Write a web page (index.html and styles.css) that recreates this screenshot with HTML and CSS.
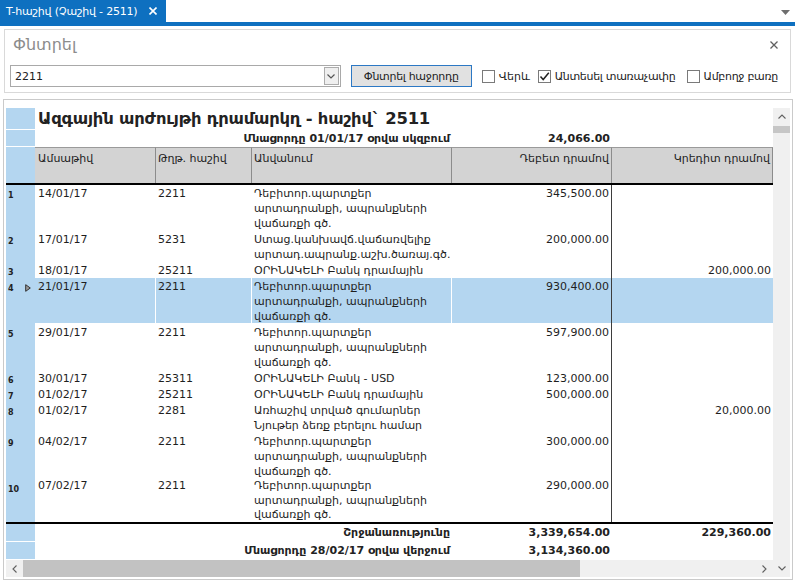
FILE: index.html
```html
<!DOCTYPE html>
<html lang="hy">
<head>
<meta charset="utf-8">
<title>T-հաշիվ</title>
<link rel="stylesheet" href="styles.css">
</head>
<body>
<div class="tabbar">
  <div class="tab">
    <span class="tab-title">T-հաշիվ (Չաշիվ - 2511)</span>
    <svg class="tab-close" width="8" height="8" viewBox="0 0 8 8"><path d="M0.5 0.5L7.5 7.5M7.5 0.5L0.5 7.5" stroke="#fff" stroke-width="1.6"/></svg>
  </div>
  <div class="tab-menu"><svg width="9" height="5" viewBox="0 0 9 5"><path d="M0 0H9L4.5 5Z" fill="#6e6e6e"/></svg></div>
</div>
<div class="tabline"></div>

<div class="search">
  <div class="search-head">
    <span class="search-title">Փնտրել</span>
    <svg class="search-close" width="8" height="8" viewBox="0 0 8 8"><path d="M0.5 0.5L7.5 7.5M7.5 0.5L0.5 7.5" stroke="#606060" stroke-width="1.3"/></svg>
  </div>
  <div class="search-row">
    <div class="combo">
      <span class="combo-text">2211</span>
      <span class="combo-btn"><svg width="8" height="5" viewBox="0 0 8 5"><path d="M0.5 0.5L4 4L7.5 0.5" fill="none" stroke="#555" stroke-width="1.2"/></svg></span>
    </div>
    <div class="btn">Փնտրել հաջորդը</div>
    <div class="chk chk1"><span class="box"></span><span>Վերև</span></div>
    <div class="chk chk2"><span class="box"><svg width="11" height="11" viewBox="0 0 11 11"><path d="M1.5 5.5L4.2 8.5L9.8 1.8" fill="none" stroke="#222" stroke-width="1.5"/></svg></span><span>Անտեսել տառաչափը</span></div>
    <div class="chk chk3"><span class="box"></span><span>Ամբողջ բառը</span></div>
  </div>
</div>

<div class="report">
  <div class="report-inner">
    <div class="grid">
      <div class="row title-row"><div class="rh"></div><div class="title">Ազգային արժույթի դրամարկղ - հաշիվ` 2511</div></div>
      <div class="row bal-row"><div class="rh"></div><div class="span-label">Մնացորդը 01/01/17 օրվա սկզբում</div><div class="num bold">24,066.00</div><div></div></div>
      <div class="row head-row">
        <div class="rh"></div>
        <div class="hc">Ամսաթիվ</div>
        <div class="hc">Թղթ. հաշիվ</div>
        <div class="hc">Անվանում</div>
        <div class="hc right">Դեբետ դրամով</div>
        <div class="hc right">Կրեդիտ դրամով</div>
      </div>
      <div class="body">
        <div class="row r h3"><div class="rh"><span>1</span></div><div class="c date">14/01/17</div><div class="c">2211</div><div class="c">Դեբիտոր.պարտքեր<br>արտադրանքի, ապրանքների<br>վաճառքի գծ.</div><div class="c num deb">345,500.00</div><div class="c num"></div></div>
        <div class="row r h2"><div class="rh"><span>2</span></div><div class="c date">17/01/17</div><div class="c">5231</div><div class="c">Ստաց.կանխավճ.վաճառվելիք<br>արտադ.ապրանք.աշխ.ծառայ.գծ.</div><div class="c num deb">200,000.00</div><div class="c num"></div></div>
        <div class="row r h1"><div class="rh"><span>3</span></div><div class="c date">18/01/17</div><div class="c">25211</div><div class="c">ՕՐԻՆԱԿԵԼԻ Բանկ դրամային</div><div class="c num deb"></div><div class="c num">200,000.00</div></div>
        <div class="row r h3 sel"><div class="rh"><span>4</span><svg class="ind" width="6" height="8" viewBox="0 0 6 8"><path d="M0.7 0.7L5.3 4L0.7 7.3Z" fill="#9a9a9a" stroke="#333" stroke-width="1"/></svg></div><div class="c date">21/01/17</div><div class="c">2211</div><div class="c">Դեբիտոր.պարտքեր<br>արտադրանքի, ապրանքների<br>վաճառքի գծ.</div><div class="c num deb">930,400.00</div><div class="c num"></div></div>
        <div class="row r h3"><div class="rh"><span>5</span></div><div class="c date">29/01/17</div><div class="c">2211</div><div class="c">Դեբիտոր.պարտքեր<br>արտադրանքի, ապրանքների<br>վաճառքի գծ.</div><div class="c num deb">597,900.00</div><div class="c num"></div></div>
        <div class="row r h1"><div class="rh"><span>6</span></div><div class="c date">30/01/17</div><div class="c">25311</div><div class="c">ՕՐԻՆԱԿԵԼԻ Բանկ - USD</div><div class="c num deb">123,000.00</div><div class="c num"></div></div>
        <div class="row r h1"><div class="rh"><span>7</span></div><div class="c date">01/02/17</div><div class="c">25211</div><div class="c">ՕՐԻՆԱԿԵԼԻ Բանկ դրամային</div><div class="c num deb">500,000.00</div><div class="c num"></div></div>
        <div class="row r h2"><div class="rh"><span>8</span></div><div class="c date">01/02/17</div><div class="c">2281</div><div class="c">Առհաշիվ տրված գումարներ<br>Նյութեր ձեռք բերելու համար</div><div class="c num deb"></div><div class="c num">20,000.00</div></div>
        <div class="row r h3"><div class="rh"><span>9</span></div><div class="c date">04/02/17</div><div class="c">2211</div><div class="c">Դեբիտոր.պարտքեր<br>արտադրանքի, ապրանքների<br>վաճառքի գծ.</div><div class="c num deb">300,000.00</div><div class="c num"></div></div>
        <div class="row r last"><div class="rh"><span>10</span></div><div class="c date">07/02/17</div><div class="c">2211</div><div class="c">Դեբիտոր.պարտքեր<br>արտադրանքի, ապրանքների<br>վաճառքի գծ.</div><div class="c num deb">290,000.00</div><div class="c num"></div></div>
      </div>
      <div class="foot">
        <div class="row foot-row"><div class="rh"></div><div class="span-label">Շրջանառությունը</div><div class="num bold">3,339,654.00</div><div class="num bold">229,360.00</div></div>
        <div class="row foot-row"><div class="rh"></div><div class="span-label">Մնացորդը 28/02/17 օրվա վերջում</div><div class="num bold">3,134,360.00</div><div></div></div>
      </div>
      <div class="hscroll">
        <div class="sbtn"><svg width="5" height="8" viewBox="0 0 5 8"><path d="M4.5 0.5L1 4L4.5 7.5" fill="none" stroke="#606060" stroke-width="1.1"/></svg></div>
        <div class="hthumb"></div>
        <div class="track"></div>
        <div class="sbtn"><svg width="5" height="8" viewBox="0 0 5 8"><path d="M0.5 0.5L4 4L0.5 7.5" fill="none" stroke="#606060" stroke-width="1.1"/></svg></div>
      </div>
    </div>
    <div class="vscroll">
      <div class="sbtn"><svg width="8" height="5" viewBox="0 0 8 5"><path d="M0.5 4.5L4 1L7.5 4.5" fill="none" stroke="#606060" stroke-width="1.1"/></svg></div>
      <div class="vthumb"></div>
      <div class="track"></div>
      <div class="sbtn"><svg width="8" height="5" viewBox="0 0 8 5"><path d="M0.5 0.5L4 4L7.5 0.5" fill="none" stroke="#606060" stroke-width="1.1"/></svg></div>
    </div>
  </div>
</div>
</body>
</html>
```

FILE: styles.css
```css
* { box-sizing: border-box; }
html, body { margin: 0; padding: 0; }
body {
  width: 795px;
  height: 581px;
  overflow: hidden;
  background: #fff;
  font-family: "DejaVu Sans", "Noto Sans", sans-serif;
  font-size: 11px;
  color: #1e1e1e;
}

/* tab bar */
.tabbar { display: flex; height: 22px; }
.tab {
  width: 166px;
  background: #0e70c0;
  color: #fff;
  display: flex;
  align-items: center;
  padding: 0 9px 0 6px;
}
.tab-title { font-size: 11px; letter-spacing: -0.2px; white-space: nowrap; }
.tab-close { margin-left: auto; }
.tab-menu { flex: 1; display: flex; justify-content: flex-end; align-items: flex-start; padding: 10px 5px 0 0; }
.tabline { height: 4px; background: #0e70c0; }

/* search panel */
.search {
  margin: 3px 4px 0 4px;
  height: 64px;
  border: 1px solid #d9d9d9;
  padding: 5px 12px 0 5px;
}
.search-head { height: 20px; display: flex; align-items: center; justify-content: space-between; margin-bottom: 10px; }
.search-title { font-size: 16px; line-height: 20px; color: #8c8c8c; margin-left: 3px; }
.search-row { display: flex; align-items: center; height: 22px; }
.combo {
  width: 331px;
  height: 22px;
  border: 1px solid #a9a9a9;
  display: flex;
  align-items: center;
  padding: 1px 1px 1px 4px;
  margin-right: 10px;
}
.combo-text { flex: 1; font-size: 11px; color: #222; }
.combo-btn {
  width: 15px;
  height: 18px;
  border: 1px solid #acacac;
  background: #efefef;
  display: flex;
  align-items: center;
  justify-content: center;
}
.btn {
  width: 121px;
  height: 22px;
  border: 1px solid #2c78c4;
  background: #e1e1e1;
  display: flex;
  align-items: center;
  justify-content: center;
  color: #222;
  margin-right: 10px;
  white-space: nowrap;
  letter-spacing: -0.3px;
}
.chk { display: flex; align-items: center; gap: 4px; color: #222; white-space: nowrap; }
.chk1 { width: 56px; }
.chk2 { width: 149px; letter-spacing: -0.3px; }
.chk3 { letter-spacing: -0.3px; }
.box {
  width: 13px;
  height: 13px;
  border: 1px solid #7a7a7a;
  background: #fff;
  display: flex;
  align-items: center;
  justify-content: center;
  flex: none;
}

/* report */
.report {
  margin: 6px 2px 0 3px;
  height: 481px;
  border: 1px solid #cacaca;
  padding: 8px 2px 2px 2px;
}
.report-inner { display: flex; height: 469px; }
.grid { width: 767px; display: flex; flex-direction: column; }

.row {
  display: grid;
  grid-template-columns: 29px 121px 96px 200px 160px 161px;
  border-bottom: 1px solid #fff;
}
.rh { background: #b4d6f0; }

.title-row { height: 22px; }
.title {
  grid-column: 2 / -1;
  font-size: 16.4px;
  font-weight: bold;
  line-height: 21px;
  padding-left: 3px;
  white-space: nowrap;
  color: #222;
  letter-spacing: -0.2px;
}
.bal-row { height: 17px; }
.span-label {
  grid-column: 2 / 5;
  text-align: right;
  font-weight: bold;
  padding: 1px 2px 0 0;
  line-height: 15px;
  white-space: nowrap;
  color: #222;
}
.num { text-align: right; padding-right: 2px; white-space: nowrap; }
.bold { font-weight: bold; padding-top: 1px; line-height: 15px; color: #222; }

.head-row { height: 38px; border-bottom: 2px solid #000; }
.hc {
  background: #d3d3d3;
  border-top: 1px solid #9a9a9a;
  border-right: 1px solid #8c8c8c;
  padding: 3px 3px 0 2px;
  line-height: 15px;
  white-space: nowrap;
  color: #222;
}
.hc:nth-child(2) { padding-left: 3px; }
.hc.right { text-align: right; padding-right: 2px; }

.body { height: 337px; }
.r.h1 { height: 16px; }
.r.h2 { height: 31px; }
.r.h3 { height: 46px; }
.r.last { height: 43px; border-bottom: none; }
.r.sel { background: #b4d6f0; }
.r .rh { display: flex; align-items: flex-start; padding: 5px 0 0 2px; font-size: 8px; font-weight: bold; line-height: 12px; color: #222; }
.ind { margin: 1px 4px 0 auto; }
.c {
  padding: 1px 2px 0 2px;
  line-height: 15px;
  white-space: nowrap;
  border-right: 1px solid #fff;
}
.r.last .c { padding-top: 0; line-height: 14.5px; }
.c.date { padding-left: 3px; }
.c.deb { border-right: 1px solid #3d3d3d; }
.c:last-child { border-right: none; }
.c.num { padding-right: 2px; }

.foot { border-top: 2px solid #000; }
.foot-row { height: 18px; }
.foot-row .span-label, .foot-row .bold { padding-top: 1px; line-height: 16px; }

/* scrollbars */
.hscroll { height: 17px; display: flex; background: #f0f0f0; }
.sbtn { width: 17px; height: 17px; display: flex; align-items: center; justify-content: center; flex: none; }
.hthumb { width: 557px; background: #c2c2c2; }
.track { flex: 1; }
.vscroll { width: 17px; display: flex; flex-direction: column; background: #f0f0f0; }
.vthumb { height: 7px; margin-top: 1px; background: #c6c6c6; }
```
